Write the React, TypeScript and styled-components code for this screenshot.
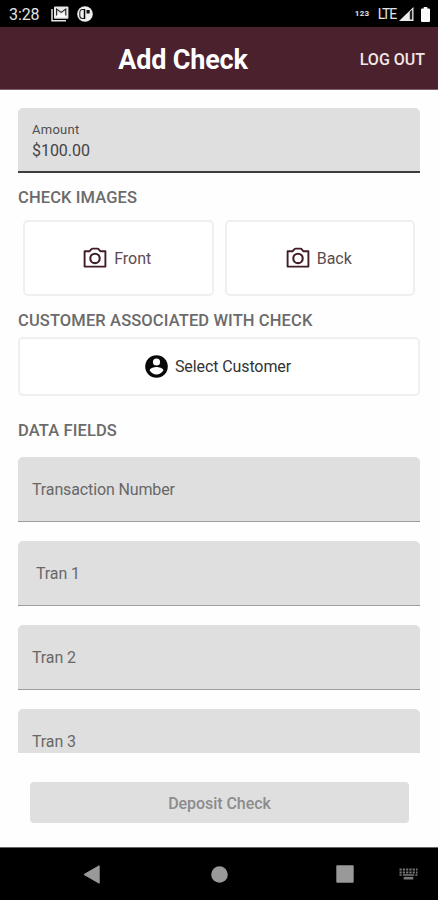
import React from "react";
import styled, { createGlobalStyle } from "styled-components";

const GlobalStyle = createGlobalStyle`
  * { box-sizing: border-box; }
  body { margin: 0; background: #fff; font-family: Roboto, "Liberation Sans", sans-serif; }
  button { font-family: inherit; margin: 0; }
  svg { display: block; flex: none; }
`;

const Screen = styled.div`
  width: 438px;
  height: 900px;
  display: flex;
  flex-direction: column;
  overflow: hidden;
  background: #fefefe;
`;

const StatusBar = styled.div`
  height: 27px;
  flex: none;
  display: flex;
  align-items: center;
  padding: 1px 8px 0 9px;
  background: #000;
  color: #e4e4e4;
`;

const Clock = styled.span`
  width: 42px;
  font-size: 16px;
  letter-spacing: -0.1px;
`;

const StatusIcons = styled.div`
  display: flex;
  align-items: center;
  gap: 8px;
  flex: 1;
`;

const Digits = styled.span`
  font-size: 8px;
  font-weight: 700;
  letter-spacing: 0.4px;
  margin: -2px 8px 0 0;
`;

const Network = styled.span`
  font-size: 14px;
  letter-spacing: -1.2px;
  margin-right: 3px;
`;

const Signal = styled.div`
  display: flex;
  gap: 7px;
`;

const Header = styled.header`
  height: 63px;
  flex: none;
  display: grid;
  grid-template-columns: 1fr auto 1fr;
  align-items: center;
  padding: 3px 13px 0 0;
  background: #4b212d;
  border-bottom: 1px solid #79606a;
  color: #fff;
`;

const Title = styled.h1`
  grid-column: 2;
  margin: 0 0 0 -59px;
  font-size: 27px;
  line-height: 32px;
  font-weight: 700;
  letter-spacing: -0.2px;
  white-space: nowrap;
`;

const LogOut = styled.button`
  justify-self: end;
  padding: 0;
  border: 0;
  background: none;
  color: #f3e6e9;
  font-size: 16px;
  font-weight: 500;
  white-space: nowrap;
`;

const Content = styled.main`
  height: 663px;
  flex: none;
  padding: 18px 18px 0;
  overflow: hidden;
`;

const AmountField = styled.div`
  height: 65px;
  display: flex;
  flex-direction: column;
  padding: 12px 14px 0;
  border-radius: 5px 5px 0 0;
  border-bottom: 2px solid #3c3f3d;
  background: #dfdfdf;
`;

const AmountLabel = styled.label`
  font-size: 13px;
  line-height: 19px;
  letter-spacing: 0.25px;
  color: #4e4e4e;
`;

const AmountValue = styled.span`
  font-size: 16px;
  line-height: 24px;
  letter-spacing: -0.05px;
  color: #444;
`;

const SectionTitle = styled.h2<{ $top: number; $bottom: number }>`
  margin: ${(p) => p.$top}px 0 ${(p) => p.$bottom}px;
  font-size: 16.5px;
  line-height: 20px;
  font-weight: 500;
  letter-spacing: 0.12px;
  color: #6b6b6b;
  white-space: nowrap;
`;

const ImageRow = styled.div`
  display: grid;
  grid-template-columns: 1fr 1fr;
  gap: 11px;
  padding: 0 5px;
`;

const OutlineButton = styled.button<{ $height: number; $color: string; $track: number }>`
  width: 100%;
  height: ${(p) => p.$height}px;
  display: flex;
  align-items: center;
  justify-content: center;
  gap: 7px;
  padding: 0 2px 0 0;
  border: 2px solid #efefef;
  border-radius: 5px;
  background: #fff;
  color: ${(p) => p.$color};
  font-size: 16px;
  letter-spacing: ${(p) => p.$track}px;
`;

const Fields = styled.div`
  display: grid;
  gap: 19px;
`;

const Field = styled.div<{ $indent: number }>`
  height: 65px;
  display: flex;
  align-items: center;
  padding: 0 14px 0 ${(p) => p.$indent}px;
  border-radius: 5px 5px 0 0;
  border-bottom: 1px solid #9d9d9d;
  background: #dfdfdf;
  color: #686868;
  font-size: 16px;
  letter-spacing: -0.13px;
`;

const Footer = styled.footer`
  flex: 1;
  padding: 29px 29px 0 30px;
`;

const Deposit = styled.button`
  width: 100%;
  height: 41px;
  padding: 2px 0 0;
  border: 0;
  border-radius: 4px;
  background: #dfdfdf;
  color: #8c8c8c;
  font-size: 16px;
  font-weight: 500;
  letter-spacing: -0.05px;
`;

const NavBar = styled.nav`
  height: 53px;
  flex: none;
  display: flex;
  align-items: center;
  padding-left: 83px;
  border-top: 1px solid #666;
  background: #000;
  color: #999;
`;

const NavItem = styled.div<{ $after: number }>`
  margin-right: ${(p) => p.$after}px;
`;

const CameraIcon = () => (
  <svg width="24" height="22" viewBox="0 0 24 22" fill="none" stroke="#401d29" strokeWidth="1.9">
    <path d="M1.6 4.3H6.5L8 2.6Q8.5 1.6 9.5 1.6H14.5Q15.3 1.6 16 2.6L17.5 4.3H22.4V19.6H1.6Z" strokeLinejoin="round" />
    <circle cx="12" cy="11.4" r="4.7" strokeWidth="2.1" />
  </svg>
);

const PersonIcon = () => (
  <svg width="23" height="23" viewBox="0 0 23 23">
    <circle cx="11.5" cy="11.5" r="11.3" fill="#080808" />
    <circle cx="11.5" cy="7" r="3.6" fill="#fff" />
    <path d="M4.6 15.3C5.2 12.9 9.2 12.1 11.5 12.1S17.8 12.9 18.4 15.3C17 17.8 14.5 19.5 11.5 19.5S6 17.8 4.6 15.3Z" fill="#fff" />
  </svg>
);

const GalleryIcon = () => (
  <svg width="18" height="16" viewBox="0 0 18 16">
    <path d="M1 3V14.8H15" fill="none" stroke="#e4e4e4" strokeWidth="1.5" />
    <rect x="3" y="0.4" width="14.4" height="12.4" rx="1" fill="#e8e8e8" />
    <path d="M5.6 9.6V3L10.2 6.4L14.8 3V9.6" fill="none" stroke="#222" strokeWidth="1.1" />
    <path d="M5.2 11L8.2 7.4L10.2 9.2L12.4 7L15.2 11Z" fill="#fff" />
  </svg>
);

const AppIcon = () => (
  <svg width="16" height="16" viewBox="0 0 16 16">
    <circle cx="8" cy="8" r="7.8" fill="#efefef" />
    <path d="M7.3 3.5H5.2C3.2 3.5 2.8 5 2.8 7V9.5C2.8 11.5 3.8 12.5 5.4 12.5H7.3" fill="none" stroke="#222" strokeWidth="1.1" />
    <path d="M7.5 3V13" stroke="#000" strokeWidth="1.5" />
    <rect x="9.5" y="4" width="3.2" height="3.6" rx="0.5" fill="#111" />
  </svg>
);

const SignalIcon = () => (
  <svg width="15" height="14" viewBox="0 0 15 14">
    <path d="M0 14L14.5 0V14Z" fill="#ededed" />
    <path d="M10.8 4.8L13.2 2.5V12.6H10.8Z" fill="#222" />
  </svg>
);

const BatteryIcon = () => (
  <svg width="9" height="15" viewBox="0 0 9 15">
    <path d="M2.7 0H6.3V1.4H8Q9 1.4 9 2.4V14Q9 15 8 15H1Q0 15 0 14V2.4Q0 1.4 1 1.4H2.7Z" fill="#fafafa" />
  </svg>
);

const KeyboardIcon = () => (
  <svg width="19" height="12" viewBox="0 0 19 12" fill="none" stroke="#777">
    <path d="M0.5 1.5H18.5M0.5 4.5H18.5" strokeWidth="2" strokeDasharray="2.2 1.1" />
    <path d="M0.5 7H2.7M3.8 7H15.2M16.3 7H18.5" strokeWidth="1.7" />
    <path d="M4.7 10.2H14.3" strokeWidth="2.6" />
  </svg>
);

const fields = [
  { label: "Transaction Number", indent: 14 },
  { label: "Tran 1", indent: 18 },
  { label: "Tran 2", indent: 14 },
  { label: "Tran 3", indent: 14 },
];

export default function App() {
  return (
    <>
      <GlobalStyle />
      <Screen>
        <StatusBar>
          <Clock>3:28</Clock>
          <StatusIcons>
            <GalleryIcon />
            <AppIcon />
          </StatusIcons>
          <Digits>123</Digits>
          <Network>LTE</Network>
          <Signal>
            <SignalIcon />
            <BatteryIcon />
          </Signal>
        </StatusBar>
        <Header>
          <Title>Add Check</Title>
          <LogOut>LOG OUT</LogOut>
        </Header>
        <Content>
          <AmountField>
            <AmountLabel>Amount</AmountLabel>
            <AmountValue>$100.00</AmountValue>
          </AmountField>
          <SectionTitle $top={15} $bottom={12}>CHECK IMAGES</SectionTitle>
          <ImageRow>
            <OutlineButton $height={76} $color="#604a50" $track={0}>
              <CameraIcon />
              Front
            </OutlineButton>
            <OutlineButton $height={76} $color="#604a50" $track={0}>
              <CameraIcon />
              Back
            </OutlineButton>
          </ImageRow>
          <SectionTitle $top={15} $bottom={6}>CUSTOMER ASSOCIATED WITH CHECK</SectionTitle>
          <OutlineButton $height={59} $color="#333" $track={-0.1}>
            <PersonIcon />
            Select Customer
          </OutlineButton>
          <SectionTitle $top={25} $bottom={16}>DATA FIELDS</SectionTitle>
          <Fields>
            {fields.map((f) => (
              <Field key={f.label} $indent={f.indent}>
                {f.label}
              </Field>
            ))}
          </Fields>
        </Content>
        <Footer>
          <Deposit>Deposit Check</Deposit>
        </Footer>
        <NavBar>
          <NavItem $after={111}>
            <svg width="17" height="19" viewBox="0 0 17 19">
              <path d="M1 9.5L16.2 0.8V18.2Z" fill="currentColor" stroke="currentColor" strokeLinejoin="round" />
            </svg>
          </NavItem>
          <NavItem $after={108}>
            <svg width="17" height="17" viewBox="0 0 17 17">
              <circle cx="8.5" cy="8.5" r="8.3" fill="currentColor" />
            </svg>
          </NavItem>
          <NavItem $after={45}>
            <svg width="18" height="18" viewBox="0 0 18 18">
              <rect x="0.3" y="0.3" width="17.4" height="17.4" rx="1" fill="currentColor" />
            </svg>
          </NavItem>
          <NavItem $after={0}>
            <KeyboardIcon />
          </NavItem>
        </NavBar>
      </Screen>
    </>
  );
}
